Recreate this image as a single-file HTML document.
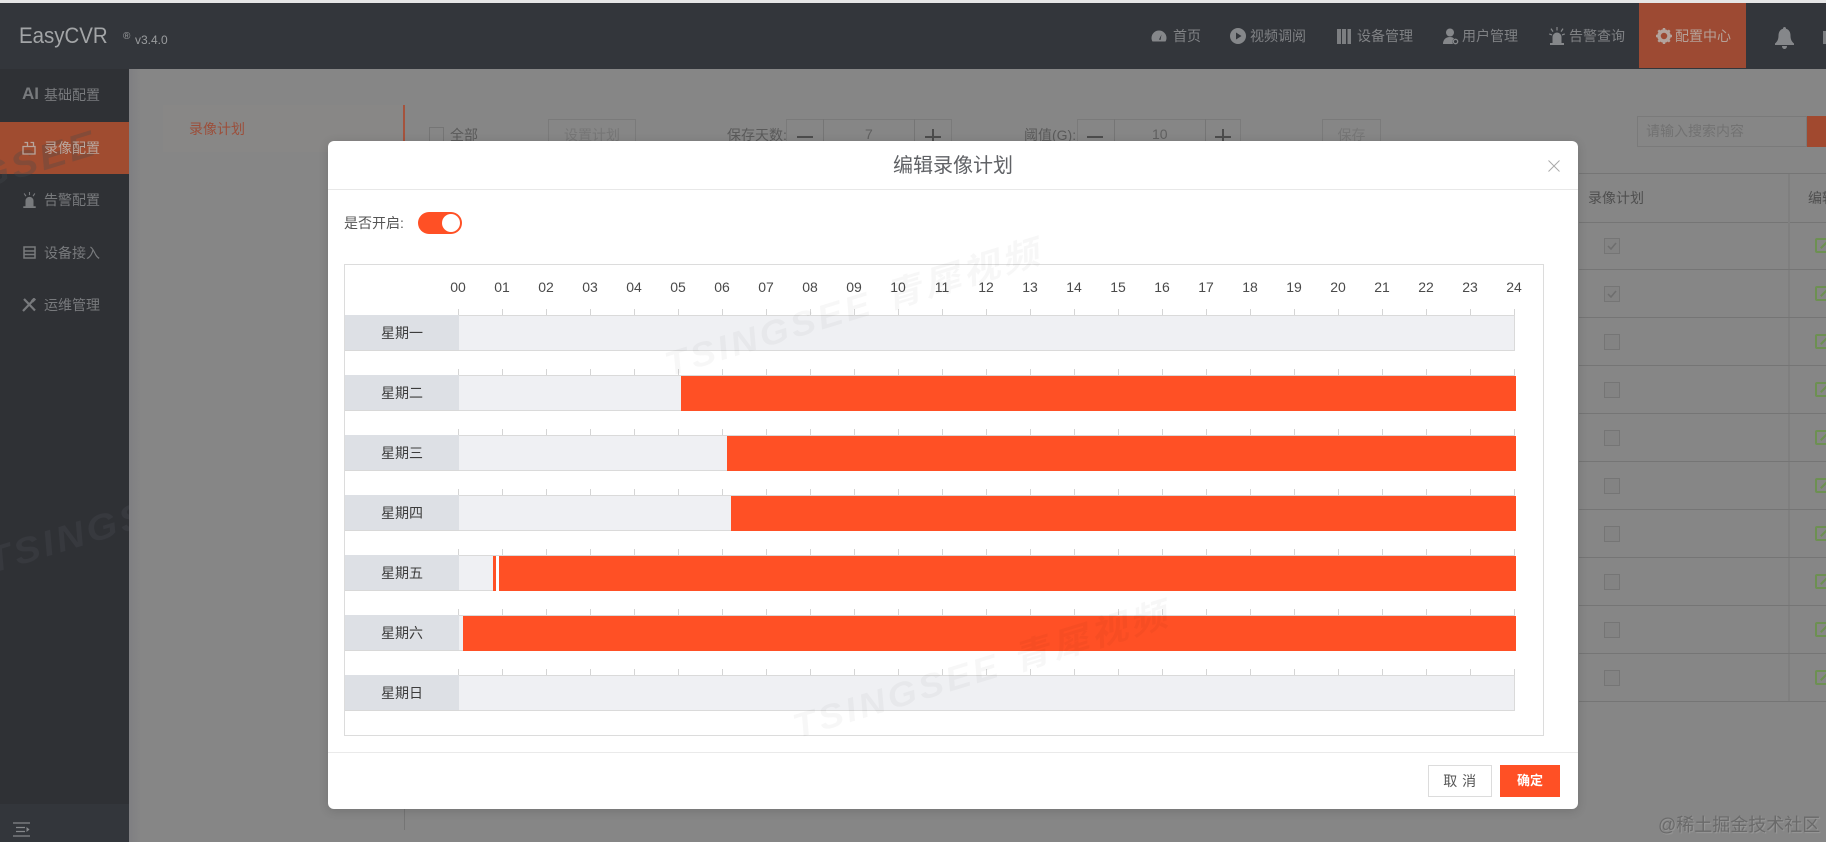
<!DOCTYPE html>
<html lang="zh"><head><meta charset="utf-8"><title>EasyCVR</title>
<style>
*{box-sizing:border-box}
html,body{margin:0;padding:0}
body{width:1826px;height:842px;position:relative;overflow:hidden;background:#868686;font-family:"Liberation Sans","Noto Sans CJK SC",sans-serif;font-size:14px}
.a{position:absolute;white-space:nowrap}
svg{position:absolute;display:block}
.n{color:#808285;font-size:14px;line-height:20px;top:26px}
.s{color:#787a7d;font-size:14px;line-height:20px;left:44px}
.l{background:#757575}
.cb{position:absolute;left:1604px;width:16px;height:16px;border:1px solid #757575;background:#838383}
.ed{position:absolute;left:1815px;width:15px;height:15px;border:2px solid #6d9052;border-radius:2px}
.ed:after{content:"";position:absolute;left:2px;top:3px;width:12px;height:2px;background:#6d9052;transform:rotate(-45deg)}
.tk{position:absolute;left:458px;width:1057px;height:6px;background:repeating-linear-gradient(90deg,#d5d5d5 0 1px,transparent 1px 44px)}
.lb{position:absolute;left:345px;width:114px;height:36px;background:#dde0e5;color:#3c3c3c;font-size:14px;line-height:36px;text-align:center;border-bottom:1px solid #d8d8d8}
.bar{position:absolute;left:459px;width:1056px;height:36px;background:#eff0f3;border:1px solid #dadada;border-left:0}
.or{position:absolute;height:35px;background:#ff5025}
.wm{position:absolute;font-weight:bold;font-style:italic;white-space:nowrap;transform:rotate(-17deg) scaleX(1.1);transform-origin:0 50%;letter-spacing:3px}
#hrs{position:absolute;left:436px;top:277px;display:flex;height:20px}
#hrs span{width:44px;text-align:center;color:#4a4a4a;font-size:14px;line-height:20px}
</style></head><body>

<div class="a" style="left:0;top:0;width:1826px;height:3px;background:#e6e6e6"></div>
<div class="a" style="left:0;top:3px;width:1826px;height:66px;background:#33363b"></div>
<div class="a" style="left:1639px;top:3px;width:107px;height:65px;background:#9d4a33"></div>
<div class="a" style="left:19px;top:21px;font-size:22px;line-height:30px;color:#a3a5a7;transform:scaleX(.93);transform-origin:0 0">EasyCVR</div>
<div class="a" style="left:123px;top:30px;font-size:10px;line-height:14px;color:#9a9c9e">®</div>
<div class="a" style="left:135px;top:32px;font-size:12px;line-height:16px;color:#9a9c9e">v3.4.0</div>

<svg style="left:1151px;top:28px" width="16" height="16" viewBox="0 0 16 16"><path d="M8 2.500A7.500 7.500 0 0 0 .5 10c0 1.300.4 2.500 1 3.500h13c.6-1 1-2.200 1-3.500A7.500 7.500 0 0 0 8 2.500zM8 11.500l2.500-5-1 5.500z" fill="#85878a"/></svg>
<div class="a n" style="left:1173px">首页</div>
<svg style="left:1230px;top:28px" width="16" height="16" viewBox="0 0 16 16"><circle cx="8" cy="8" r="8" fill="#85878a"/><path d="M6 4.500v7l5.500-3.500z" fill="#33363b"/></svg>
<div class="a n" style="left:1250px">视频调阅</div>
<svg style="left:1337px;top:29px" width="15" height="15" viewBox="0 0 15 15"><path d="M0 0h4v15H0zM5 0h4v15H5zM10.500 0H14v15h-3.500z" fill="#7c7e81"/></svg>
<div class="a n" style="left:1357px">设备管理</div>
<svg style="left:1443px;top:28px" width="16" height="17" viewBox="0 0 16 17"><circle cx="7" cy="4.500" r="4" fill="#85878a"/><path d="M0 16c0-4 2.500-7 7-7 2 0 3 .5 4 1.500-1.500 1-2 3.500-1 5.500z" fill="#85878a"/><circle cx="12.500" cy="13.500" r="2.200" fill="none" stroke="#85878a" stroke-width="1.300"/></svg>
<div class="a n" style="left:1462px">用户管理</div>
<svg style="left:1549px;top:27px" width="16" height="18" viewBox="0 0 16 18"><path d="M3.500 16V10a4.500 4.500 0 0 1 9 0v6zM1 16h14v2H1zM7.400 0h1.200v3.500H7.400zM1.500 2l1-.7 2 3-1 .7zM14.500 2l-1-.7-2 3 1 .7zM0 7.500l.4-1.100 2.800 1-.4 1.100zM16 7.500l-.4-1.100-2.800 1 .4 1.100z" fill="#85878a"/></svg>
<div class="a n" style="left:1569px">告警查询</div>
<svg style="left:1656px;top:28px" width="16" height="16" viewBox="0 0 16 16"><circle cx="8" cy="8" r="5" fill="none" stroke="#b3a39c" stroke-width="3.500"/><path d="M8 0v3M8 13v3M0 8h3M13 8h3M2.300 2.300l2.100 2.100M11.600 11.600l2.100 2.100M2.300 13.700l2.100-2.100M11.600 4.400l2.100-2.100" stroke="#b3a39c" stroke-width="2.400"/></svg>
<div class="a n" style="left:1675px;color:#b5a198">配置中心</div>
<svg style="left:1775px;top:27px" width="19" height="22" viewBox="0 0 19 22"><path d="M9.500 0c1 0 1.500.7 1.500 1.700 3 .8 4.500 3.500 4.500 6.800 0 3.500 1 6 3.500 8v1.500H0v-1.500c2.500-2 3.500-4.500 3.500-8 0-3.300 1.500-6 4.500-6.800C8 .7 8.500 0 9.500 0zM7 19h5c0 1.700-1 3-2.500 3S7 20.700 7 19z" fill="#85878a"/></svg>
<svg style="left:1823px;top:31px" width="3" height="13" viewBox="0 0 3 13"><rect width="3" height="13" fill="#7a7c7f"/></svg>

<div class="a" style="left:0;top:69px;width:129px;height:773px;background:#2f3135;overflow:hidden">
<div class="a" style="left:0;top:735px;width:129px;height:38px;background:#33363b"></div>
<div class="a" style="left:0;top:53px;width:129px;height:52px;background:#a04c30"></div>
<div class="wm" style="left:-120px;top:118px;font-size:36px;color:rgba(70,72,76,.3)">TSINGSEE</div>
<div class="wm" style="left:-12px;top:472px;font-size:36px;color:#37393e">TSINGSEE</div>
</div>
<div class="a" style="left:22px;top:84px;font-size:17px;line-height:20px;font-weight:bold;color:#787a7d">AI</div>
<div class="a s" style="top:85px">基础配置</div>
<svg style="left:22px;top:141px" width="14" height="14" viewBox="0 0 14 14"><path d="M1 5.500h12v7.500H1zM2.500 1.500h3v4M8.500 1.500h3v4" fill="none" stroke="#b8a59c" stroke-width="1.300"/></svg>
<div class="a s" style="top:138px;color:#b8a59c">录像配置</div>
<svg style="left:22px;top:192px" width="15" height="16" viewBox="0 0 16 18"><path d="M3.500 16V10a4.500 4.500 0 0 1 9 0v6zM1 16h14v2H1zM7.400 0h1.200v3.500H7.400zM1.500 2l1-.7 2 3-1 .7zM14.500 2l-1-.7-2 3 1 .7z" fill="#787a7d"/></svg>
<div class="a s" style="top:190px">告警配置</div>
<svg style="left:23px;top:246px" width="13" height="13" viewBox="0 0 13 13"><path d="M1 1h11v11H1zM1 5h11M1 8.500h11" fill="none" stroke="#787a7d" stroke-width="1.500"/></svg>
<div class="a s" style="top:243px">设备接入</div>
<svg style="left:22px;top:298px" width="14" height="14" viewBox="0 0 14 14"><path d="M1 13L11 2.500M2 1l11 11.500" stroke="#787a7d" stroke-width="2.200" fill="none"/><path d="M13 .5l-3 3" stroke="#787a7d" stroke-width="3"/></svg>
<div class="a s" style="top:295px">运维管理</div>
<svg style="left:13px;top:822px" width="17" height="15" viewBox="0 0 17 15"><path d="M0 1h17M3 5.500h9M3 9.500h9M0 14h17" stroke="#85878a" stroke-width="1.300"/><path d="M13.500 5l3 2.500-3 2.500z" fill="#85878a"/></svg>

<div class="a" style="left:129px;top:69px;width:12px;height:773px;background:linear-gradient(90deg,#7f7f82,#868686)"></div>
<div class="a" style="left:163px;top:105px;width:240px;height:47px;background:#888786"></div>
<div class="a" style="left:189px;top:119px;font-size:14px;line-height:20px;color:#9c4f3b">录像计划</div>
<div class="a" style="left:403px;top:105px;width:2px;height:40px;background:#a5533d"></div>
<div class="a l" style="left:404px;top:800px;width:1px;height:30px"></div>

<div class="a" style="left:429px;top:127px;width:15px;height:15px;border:1px solid #757575"></div>
<div class="a" style="left:450px;top:125px;font-size:14px;line-height:20px;color:#5a5a5a">全部</div>
<div class="a" style="left:548px;top:119px;width:88px;height:30px;border:1px solid #7a7a7a;color:#767676;font-size:14px;line-height:30px;text-align:center">设置计划</div>
<div class="a" style="left:727px;top:125px;font-size:14px;line-height:20px;color:#5a5a5a">保存天数:</div>
<div class="a" style="left:786px;top:119px;width:166px;height:30px;border:1px solid #7a7a7a"></div>
<div class="a l" style="left:823px;top:119px;width:1px;height:30px"></div>
<div class="a l" style="left:914px;top:119px;width:1px;height:30px"></div>
<div class="a" style="left:797px;top:136px;width:16px;height:2px;background:#4c4c4c"></div>
<div class="a" style="left:925px;top:136px;width:16px;height:2px;background:#4c4c4c"></div>
<div class="a" style="left:932px;top:129px;width:2px;height:12px;background:#4c4c4c"></div>
<div class="a" style="left:865px;top:124px;font-size:14px;line-height:20px;color:#606060">7</div>
<div class="a" style="left:1024px;top:125px;font-size:14px;line-height:20px;color:#5a5a5a">阈值(G):</div>
<div class="a" style="left:1077px;top:119px;width:164px;height:30px;border:1px solid #7a7a7a"></div>
<div class="a l" style="left:1114px;top:119px;width:1px;height:30px"></div>
<div class="a l" style="left:1205px;top:119px;width:1px;height:30px"></div>
<div class="a" style="left:1087px;top:136px;width:16px;height:2px;background:#4c4c4c"></div>
<div class="a" style="left:1215px;top:136px;width:16px;height:2px;background:#4c4c4c"></div>
<div class="a" style="left:1222px;top:129px;width:2px;height:12px;background:#4c4c4c"></div>
<div class="a" style="left:1152px;top:124px;font-size:14px;line-height:20px;color:#606060">10</div>
<div class="a" style="left:1322px;top:119px;width:59px;height:30px;border:1px solid #7a7a7a;color:#767676;font-size:14px;line-height:30px;text-align:center">保存</div>
<div class="a" style="left:1637px;top:116px;width:170px;height:31px;border:1px solid #7a7a7a;color:#727272;font-size:14px;line-height:29px;padding-left:8px">请输入搜索内容</div>
<div class="a" style="left:1807px;top:116px;width:19px;height:31px;background:#a1492f"></div>

<div class="a l" style="left:1579px;top:173px;width:247px;height:1px"></div>
<div class="a l" style="left:1579px;top:222px;width:247px;height:1px"></div>
<div class="a" style="left:1788px;top:174px;width:2px;height:527px;background:#7f7f7f"></div>
<div class="a" style="left:1588px;top:188px;font-size:14px;line-height:20px;color:#4f4f4f">录像计划</div>
<div class="a" style="left:1808px;top:188px;font-size:14px;line-height:20px;color:#4f4f4f">编辑</div>
<div class="a l" style="left:1579px;top:269px;width:247px;height:1px"></div>
<div class="a l" style="left:1579px;top:317px;width:247px;height:1px"></div>
<div class="a l" style="left:1579px;top:365px;width:247px;height:1px"></div>
<div class="a l" style="left:1579px;top:413px;width:247px;height:1px"></div>
<div class="a l" style="left:1579px;top:461px;width:247px;height:1px"></div>
<div class="a l" style="left:1579px;top:509px;width:247px;height:1px"></div>
<div class="a l" style="left:1579px;top:557px;width:247px;height:1px"></div>
<div class="a l" style="left:1579px;top:605px;width:247px;height:1px"></div>
<div class="a l" style="left:1579px;top:653px;width:247px;height:1px"></div>
<div class="a l" style="left:1579px;top:701px;width:247px;height:1px"></div>
<div class="cb" style="top:238px"></div><div class="cb" style="top:286px"></div><div class="cb" style="top:334px"></div><div class="cb" style="top:382px"></div><div class="cb" style="top:430px"></div><div class="cb" style="top:478px"></div><div class="cb" style="top:526px"></div><div class="cb" style="top:574px"></div><div class="cb" style="top:622px"></div><div class="cb" style="top:670px"></div>
<svg style="left:1606px;top:241px" width="12" height="10" viewBox="0 0 12 10"><path d="M2 5l3 3 5-6" fill="none" stroke="#6e6e6e" stroke-width="1.500"/></svg>
<svg style="left:1606px;top:289px" width="12" height="10" viewBox="0 0 12 10"><path d="M2 5l3 3 5-6" fill="none" stroke="#6e6e6e" stroke-width="1.500"/></svg>
<div class="ed" style="top:238px"></div><div class="ed" style="top:286px"></div><div class="ed" style="top:334px"></div><div class="ed" style="top:382px"></div><div class="ed" style="top:430px"></div><div class="ed" style="top:478px"></div><div class="ed" style="top:526px"></div><div class="ed" style="top:574px"></div><div class="ed" style="top:622px"></div><div class="ed" style="top:670px"></div>

<div class="a" style="left:328px;top:141px;width:1250px;height:668px;background:#fff;border-radius:6px;box-shadow:0 2px 10px rgba(0,0,0,.15)"></div>
<div class="a" style="left:328px;top:189px;width:1250px;height:1px;background:#e8e8e8"></div>
<div class="a" style="left:893px;top:152px;font-size:20px;line-height:28px;color:#606266">编辑录像计划</div>
<svg style="left:1548px;top:160px" width="12" height="12" viewBox="0 0 12 12"><path d="M.5.5l11 11M11.500.5l-11 11" stroke="#aaa" stroke-width="1"/></svg>
<div class="a" style="left:344px;top:213px;font-size:14px;line-height:20px;color:#555">是否开启:</div>
<div class="a" style="left:418px;top:212px;width:44px;height:22px;border-radius:11px;background:#ff5025"></div>
<div class="a" style="left:442px;top:214px;width:18px;height:18px;border-radius:50%;background:#fff"></div>

<div class="a" style="left:344px;top:264px;width:1200px;height:472px;border:1px solid #dcdcdc"></div>
<div id="hrs"><span>00</span><span>01</span><span>02</span><span>03</span><span>04</span><span>05</span><span>06</span><span>07</span><span>08</span><span>09</span><span>10</span><span>11</span><span>12</span><span>13</span><span>14</span><span>15</span><span>16</span><span>17</span><span>18</span><span>19</span><span>20</span><span>21</span><span>22</span><span>23</span><span>24</span></div>

<div class="tk" style="top:309px"></div><div class="lb" style="top:315px">星期一</div><div class="bar" style="top:315px"></div>
<div class="tk" style="top:369px"></div><div class="lb" style="top:375px">星期二</div><div class="bar" style="top:375px"></div><div class="or" style="top:376px;left:681px;width:835px"></div>
<div class="tk" style="top:429px"></div><div class="lb" style="top:435px">星期三</div><div class="bar" style="top:435px"></div><div class="or" style="top:436px;left:727px;width:789px"></div>
<div class="tk" style="top:489px"></div><div class="lb" style="top:495px">星期四</div><div class="bar" style="top:495px"></div><div class="or" style="top:496px;left:731px;width:785px"></div>
<div class="tk" style="top:549px"></div><div class="lb" style="top:555px">星期五</div><div class="bar" style="top:555px"></div><div class="or" style="top:556px;left:493px;width:3px"></div><div class="a" style="left:496px;top:556px;width:3px;height:35px;background:#fff"></div><div class="or" style="top:556px;left:499px;width:1017px"></div>
<div class="tk" style="top:609px"></div><div class="lb" style="top:615px">星期六</div><div class="bar" style="top:615px"></div><div class="or" style="top:616px;left:463px;width:1053px"></div>
<div class="tk" style="top:669px"></div><div class="lb" style="top:675px">星期日</div><div class="bar" style="top:675px"></div>

<div class="wm" style="left:665px;top:338px;font-size:34px;color:rgba(0,0,0,.03)">TSINGSEE 青犀视频</div>
<div class="wm" style="left:793px;top:700px;font-size:34px;color:rgba(0,0,0,.03)">TSINGSEE 青犀视频</div>

<div class="a" style="left:328px;top:752px;width:1250px;height:1px;background:#eaeaea"></div>
<div class="a" style="left:1428px;top:765px;width:64px;height:32px;border:1px solid #dcdcdc;background:#fff;color:#555;font-size:14px;line-height:30px;text-align:center;letter-spacing:.5px">取 消</div>
<div class="a" style="left:1500px;top:765px;width:60px;height:32px;background:#ff5025;color:#fff;font-size:13px;font-weight:bold;line-height:32px;text-align:center">确定</div>
<div class="a" style="left:1658px;top:813px;font-size:18px;line-height:24px;color:#6a6a6a;text-shadow:1px 1px 1px #9a9a9a">@稀土掘金技术社区</div>
</body></html>
